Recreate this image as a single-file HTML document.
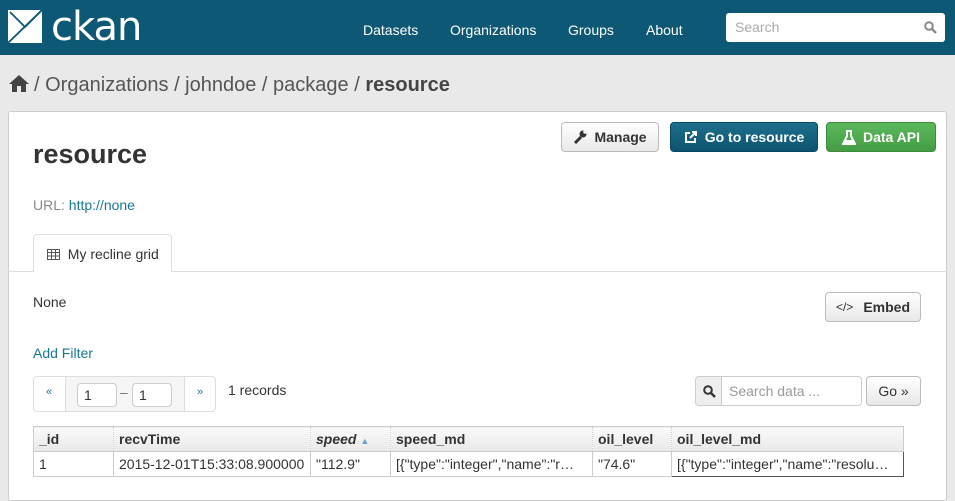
<!DOCTYPE html>
<html><head><style>
*{box-sizing:border-box;margin:0;padding:0}
body{width:955px;height:495px;overflow:hidden;background:#e9e9e9;font-family:"Liberation Sans",sans-serif;position:relative;color:#333}
.a{position:absolute}
.hd{left:0;top:0;width:955px;height:55px;background:#0d5874}
.nav{color:#fff;font-size:14px;top:22px}
.btn{position:absolute;border-radius:4px;font-size:14px;font-weight:bold;display:flex;align-items:center;justify-content:center;gap:7px}
.w{background:linear-gradient(#fff,#e8e8e8);border:1px solid #bbb;color:#333}
td,th{border:1px solid #ccc;border-style:dotted solid;font-size:14px;height:25px;padding:0 5px;text-align:left;white-space:nowrap;overflow:hidden}
th{background:linear-gradient(#fafafa,#e8e8e8);font-weight:bold;border-style:solid dotted}
table{border-collapse:collapse;table-layout:fixed;border:1px solid #ccc}
</style></head><body>
<div class="a hd"></div>
<svg class="a" style="left:8px;top:10px" width="34" height="33"><rect width="34" height="33" fill="#fff"/><path d="M2 2 L17 17 L34 0" stroke="#0d5874" stroke-width="1.8" fill="none"/><path d="M34 0 L0 33" stroke="#0d5874" stroke-width="1.8"/></svg>
<div class="a" style="left:51px;top:4px;font-size:40px;color:#fff;font-family:'DejaVu Sans',sans-serif;letter-spacing:-1px">ckan</div>
<div class="a nav" style="left:363px">Datasets</div>
<div class="a nav" style="left:450px">Organizations</div>
<div class="a nav" style="left:568px">Groups</div>
<div class="a nav" style="left:646px">About</div>
<div class="a" style="left:726px;top:13px;width:219px;height:29px;background:#fff;border-radius:3px;font-size:14px;color:#aaa;padding:6px 9px">Search
<svg style="position:absolute;right:8px;top:8px" width="13" height="13"><circle cx="5" cy="5" r="3.8" stroke="#888" stroke-width="2" fill="none"/><path d="M8 8 L12 12" stroke="#888" stroke-width="2.4"/></svg></div>
<svg class="a" style="left:8px;top:74px" width="22" height="19"><path d="M11 1 L21 10 L18 10 L18 18 L13 18 L13 12 L9 12 L9 18 L4 18 L4 10 L1 10 Z" fill="#444"/></svg>
<div class="a" style="left:34px;top:74px;font-size:20px;color:#555">/ Organizations / johndoe / package / <b style="color:#444">resource</b></div>
<div class="a" style="left:8px;top:111px;width:939px;height:390px;background:#fff;border:1px solid #ccc;border-radius:3px"></div>
<div class="a" style="left:33px;top:139px;font-size:27px;font-weight:bold">resource</div>
<div class="btn w" style="left:561px;top:122px;width:98px;height:30px"><svg width="14" height="14"><path d="M2 13 L8 7" stroke="#333" stroke-width="3"/><circle cx="10" cy="4" r="3.5" fill="#333"/><circle cx="12" cy="2" r="1.8" fill="#f4f4f4"/></svg>Manage</div>
<div class="btn" style="left:670px;top:122px;width:148px;height:30px;background:linear-gradient(#1e6f8c,#0d5470);color:#fff;border:1px solid #0a4760"><svg width="14" height="14"><path d="M6 3 H2 V12 H11 V8" stroke="#fff" stroke-width="2" fill="none"/><path d="M6 8 L12 2 M8 2 H12 V6" stroke="#fff" stroke-width="2" fill="none"/></svg>Go to resource</div>
<div class="btn" style="left:826px;top:122px;width:110px;height:30px;background:linear-gradient(#5cb85c,#449d44);color:#fff;border:1px solid #3d8b3d"><svg width="14" height="15"><path d="M4 1 H10 M5 1 V6 L1 14 H13 L9 6 V1" stroke="#fff" stroke-width="2" fill="none"/><path d="M3 10 H11 L13 14 H1 Z" fill="#fff"/></svg>Data API</div>
<div class="a" style="left:33px;top:197px;font-size:14px;color:#888">URL: <span style="color:#187794">http://none</span></div>
<div class="a" style="left:8px;top:271px;width:939px;border-top:1px solid #ddd"></div>
<div class="a" style="left:33px;top:234px;width:139px;height:38px;background:#fff;border:1px solid #ddd;border-bottom:none;border-radius:4px 4px 0 0;font-size:14px;padding:11px 0 0 13px"><svg width="13" height="11" style="vertical-align:-1px"><path d="M0.5 0.5 H12.5 V10.5 H0.5 Z M0.5 3.5 H12.5 M0.5 7 H12.5 M4.5 0.5 V10.5 M8.5 0.5 V10.5" stroke="#555" fill="none"/></svg>&nbsp; My recline grid</div>
<div class="a" style="left:33px;top:294px;font-size:14px">None</div>
<div class="btn w" style="left:825px;top:292px;width:96px;height:30px;gap:10px"><span style="font-weight:normal;font-size:12px">&lt;/&gt;</span>Embed</div>
<div class="a" style="left:33px;top:345px;font-size:14px;color:#187794">Add Filter</div>
<div class="a" style="left:33px;top:376px;width:183px;height:36px;border:1px solid #ddd;border-radius:4px;background:#fff"></div>
<div class="a" style="left:65px;top:377px;width:120px;height:34px;background:#f5f5f5;border-left:1px solid #ddd;border-right:1px solid #ddd"></div>
<div class="a" style="left:46px;top:386px;font-size:11px;color:#187794">«</div>
<div class="a" style="left:197px;top:386px;font-size:11px;color:#187794">»</div>
<div class="a" style="left:77px;top:383px;width:40px;height:24px;border:1px solid #ccc;border-radius:4px;background:#fff;font-size:14px;padding:3px 6px">1</div>
<div class="a" style="left:120px;top:384px;font-size:14px;color:#777">–</div>
<div class="a" style="left:132px;top:383px;width:40px;height:24px;border:1px solid #ccc;border-radius:4px;background:#fff;font-size:14px;padding:3px 6px">1</div>
<div class="a" style="left:228px;top:382px;font-size:14px">1 records</div>
<div class="a" style="left:695px;top:376px;width:27px;height:30px;border:1px solid #ccc;border-radius:4px 0 0 4px;background:#eee;padding:8px 7px"><svg width="13" height="13" style="display:block"><circle cx="5" cy="5" r="3.8" stroke="#333" stroke-width="2" fill="none"/><path d="M8 8 L12 12" stroke="#333" stroke-width="2.4"/></svg></div>
<div class="a" style="left:721px;top:376px;width:141px;height:30px;border:1px solid #ccc;border-radius:0 4px 4px 0;font-size:14px;color:#999;padding:6px 7px">Search data ...</div>
<div class="btn w" style="left:866px;top:376px;width:55px;height:30px;font-weight:normal">Go »</div>
<table class="a" style="left:33px;top:426px;width:870px">
<colgroup><col style="width:80px"><col style="width:197px"><col style="width:80px"><col style="width:202px"><col style="width:79px"><col style="width:232px"></colgroup>
<tr><th>_id</th><th>recvTime</th><th><i>speed</i> <span style="color:#6a9fd0;font-size:9px">▲</span></th><th>speed_md</th><th>oil_level</th><th>oil_level_md</th></tr>
<tr><td>1</td><td>2015-12-01T15:33:08.900000</td><td>"112.9"</td><td>[{"type":"integer","name":"r…</td><td>"74.6"</td><td style="border:1px solid #555">[{"type":"integer","name":"resolu…</td></tr>
</table>
</body></html>
